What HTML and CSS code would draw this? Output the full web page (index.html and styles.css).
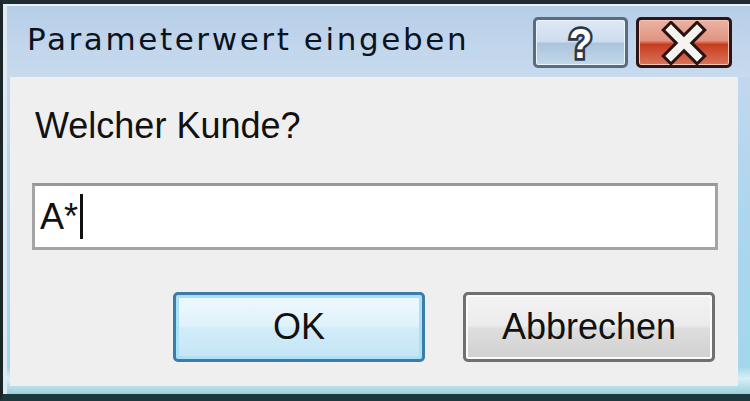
FILE: index.html
```html
<!DOCTYPE html>
<html lang="de">
<head>
<meta charset="utf-8">
<title>Parameterwert eingeben</title>
<link rel="stylesheet" href="styles.css">
</head>
<body>
<div class="window">
  <div class="frame">
    <div class="titlebar">
      <span class="title">Parameterwert eingeben</span>
      <div class="caption-buttons">
        <div class="cbtn help"><span class="qmark">?</span></div>
        <div class="cbtn close">
          <svg width="48" height="44" viewBox="0 0 48 44">
            <path d="M11 9 L37 35 M37 9 L11 35" class="x-outline"/>
            <path d="M11 9 L37 35 M37 9 L11 35" class="x-fill"/>
          </svg>
        </div>
      </div>
    </div>
    <div class="client">
      <div class="prompt">Welcher Kunde?</div>
      <div class="input"><span class="value">A*</span><span class="caret"></span></div>
      <div class="actions">
        <button class="btn default">OK</button>
        <button class="btn">Abbrechen</button>
      </div>
    </div>
  </div>
</div>
</body>
</html>
```
FILE: styles.css
```css
html, body {
  margin: 0;
  padding: 0;
}
body {
  width: 750px;
  height: 401px;
  overflow: hidden;
  font-family: "Liberation Sans", Arial, sans-serif;
  background: #1e2b31;
}
.window {
  box-sizing: border-box;
  width: 750px;
  height: 401px;
  border-top: 4px solid #1f2c32;
  border-left: 3px solid #1b2629;
  border-bottom: 7px solid #1d383d;
}
.frame {
  box-sizing: border-box;
  height: 100%;
  display: flex;
  flex-direction: column;
  border-top: 2px solid #e9f1f8;
  border-left: 4px solid #e0eaf3;
  padding-bottom: 8px;
  background: linear-gradient(to bottom, #b8cfe8 0%, #c3d7ed 18%, #acd6ee 55%, #a4d7ec 93%, #d6f0f6 96%, #9dd0da 100%);
}
.titlebar {
  height: 71px;
  flex: none;
  display: flex;
  align-items: flex-start;
  justify-content: space-between;
  padding: 0 18px 0 20px;
  background: linear-gradient(to bottom, #b7cee8 0%, #c2d6ec 60%, #c7daee 100%);
}
.title {
  margin-top: 15px;
  font-family: "DejaVu Sans", sans-serif;
  font-size: 31px;
  line-height: 36px;
  letter-spacing: 2.6px;
  color: #0b131c;
}
.caption-buttons {
  margin-top: 11px;
  display: flex;
  gap: 8px;
}
.cbtn {
  box-sizing: border-box;
  height: 51px;
  border-radius: 5px;
  display: flex;
  align-items: center;
  justify-content: center;
  overflow: hidden;
}
.help {
  width: 95px;
  border: 3px solid #5b6b80;
  box-shadow: inset 0 0 0 1px #eef4fb;
  background: linear-gradient(to bottom, #dfe9f5 0%, #cddcee 48%, #abc5dd 52%, #c3d7ea 100%);
}
.close {
  width: 96px;
  border: 3px solid #2e1414;
  box-shadow: inset 0 0 0 1px #f3c6b8;
  background: linear-gradient(to bottom, #eab3a3 0%, #e09480 46%, #c73c20 54%, #d8745a 100%);
}
.qmark {
  font-family: "Liberation Sans", Arial, sans-serif;
  font-weight: bold;
  font-size: 38px;
  line-height: 44px;
  color: #ffffff;
  -webkit-text-stroke: 5px #2c3846;
  paint-order: stroke fill;
  transform: scaleY(1.12);
}
.x-outline {
  stroke: #2b1212;
  stroke-width: 14;
  stroke-linecap: square;
  fill: none;
}
.x-fill {
  stroke: #f4f4f0;
  stroke-width: 8;
  stroke-linecap: square;
  fill: none;
}
.client {
  flex: 1;
  margin: 0 12px 0 3px;
  background: #f0efef;
  display: flex;
  flex-direction: column;
  padding-top: 29px;
  box-sizing: border-box;
}
.prompt {
  margin-left: 25px;
  font-size: 36px;
  line-height: 40px;
  color: #111;
}
.input {
  box-sizing: border-box;
  height: 67px;
  margin: 37px 20px 0 22px;
  border: 3px solid #a4a4a4;
  border-top-color: #979797;
  background: #ffffff;
  display: flex;
  align-items: center;
  padding-left: 5px;
}
.value {
  font-size: 36px;
  line-height: 40px;
  color: #111;
}
.caret {
  width: 3px;
  height: 45px;
  margin-left: 2px;
  background: #111;
}
.actions {
  margin-top: 42px;
  display: flex;
  justify-content: flex-end;
  gap: 38px;
  padding-right: 23px;
}
.btn {
  box-sizing: border-box;
  width: 252px;
  height: 70px;
  border-radius: 5px;
  font-family: "Liberation Sans", Arial, sans-serif;
  font-size: 36px;
  color: #111;
  padding: 0;
  border: 3px solid #707070;
  box-shadow: inset 0 0 0 2px #fbfbfb;
  background: linear-gradient(to bottom, #f3f3f3 0%, #ebebeb 48%, #dedede 52%, #d0d0d0 100%);
}
.btn.default {
  border-color: #3c7ca8;
  box-shadow: inset 0 0 0 3px #a9e1f6;
  background: linear-gradient(to bottom, #eef8fd 0%, #e1f2fb 48%, #d2ecf9 52%, #c4e5f6 100%);
}
```
